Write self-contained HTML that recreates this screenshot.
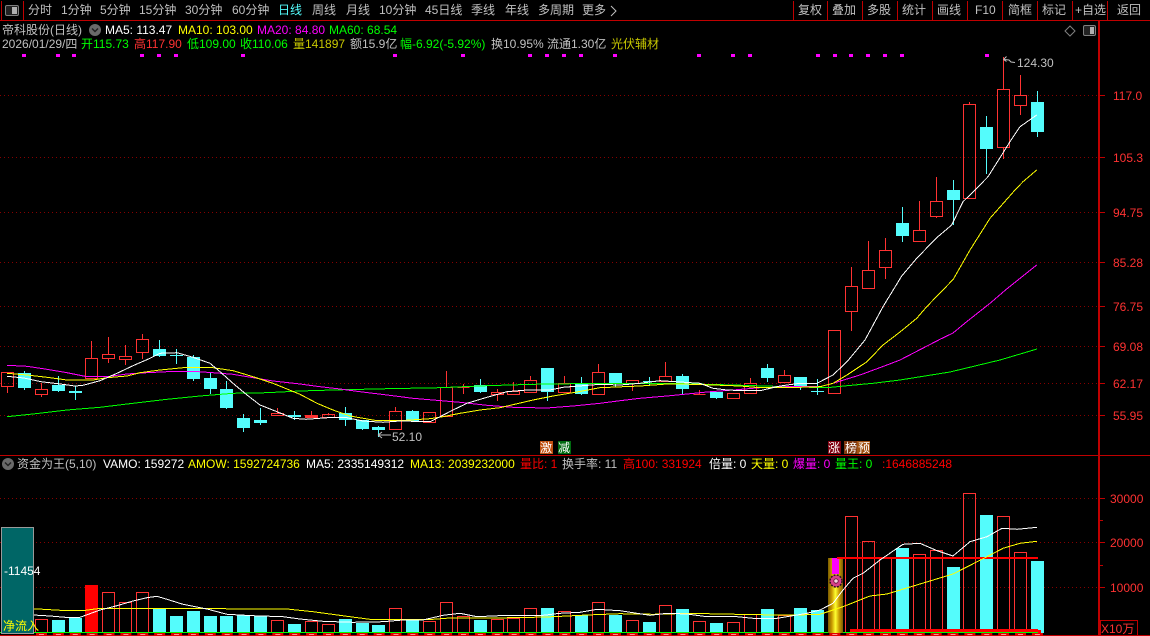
<!DOCTYPE html>
<html lang="zh">
<head>
<meta charset="utf-8">
<title>帝科股份(日线)</title>
<style>
html,body{margin:0;padding:0;background:#000;width:1150px;height:636px;overflow:hidden}
svg{display:block}
text{font-family:"Liberation Sans","WenQuanYi Zen Hei","Noto Sans CJK SC",sans-serif;font-size:12px;white-space:pre}
.g{fill:#c0c0c0}.w{fill:#fff}.y{fill:#ffff00}.m{fill:#ff00ff}.l{fill:#00ff00}.r{fill:#ff3232}.rr{fill:#ff0000}.d{fill:#c8c800}
</style>
</head>
<body>
<svg width="1150" height="636" viewBox="0 0 1150 636" xmlns="http://www.w3.org/2000/svg">
<defs>
<linearGradient id="gold" x1="0" x2="1" y1="0" y2="0">
<stop offset="0" stop-color="#7a5c00"/><stop offset=".25" stop-color="#c89800"/><stop offset=".5" stop-color="#ffff30"/><stop offset=".75" stop-color="#c89800"/><stop offset="1" stop-color="#7a5c00"/>
</linearGradient>
</defs>
<rect width="1150" height="636" fill="#000"/>

<!-- frame lines -->
<g shape-rendering="crispEdges" fill="#c00000">
<rect x="0" y="20" width="1150" height="1"/>
<rect x="0" y="455" width="1150" height="1"/>
<rect x="0" y="635" width="1150" height="1"/>
<rect x="1098" y="21" width="2" height="615"/>
<rect x="1" y="1" width="1" height="19"/>
<rect x="23" y="1" width="1" height="19"/>
<rect x="793" y="1" width="1" height="19"/>
<rect x="827" y="1" width="1" height="19"/>
<rect x="862" y="1" width="1" height="19"/>
<rect x="897" y="1" width="1" height="19"/>
<rect x="932" y="1" width="1" height="19"/>
<rect x="967" y="1" width="1" height="19"/>
<rect x="1002" y="1" width="1" height="19"/>
<rect x="1037" y="1" width="1" height="19"/>
<rect x="1072" y="1" width="1" height="19"/>
<rect x="1107" y="1" width="1" height="19"/>
<!-- ticks -->
<rect x="1100" y="95" width="5" height="1"/><rect x="1100" y="157" width="5" height="1"/><rect x="1100" y="212" width="5" height="1"/><rect x="1100" y="262" width="5" height="1"/><rect x="1100" y="306" width="5" height="1"/><rect x="1100" y="346" width="5" height="1"/><rect x="1100" y="383" width="5" height="1"/><rect x="1100" y="415" width="5" height="1"/>
<rect x="1100" y="498" width="5" height="1"/><rect x="1100" y="542" width="5" height="1"/><rect x="1100" y="587" width="5" height="1"/><rect x="1100" y="520" width="3" height="1"/><rect x="1100" y="565" width="3" height="1"/>
</g>

<!-- left toolbar icon -->
<rect x="5.5" y="5.5" width="13" height="10" rx="1.5" fill="#222" stroke="#808080"/>
<rect x="12" y="7" width="5" height="7" fill="#b0b0b0"/>

<!-- toolbar -->
<g class="g">
<text x="28" y="14" class="g">分时</text>
<text x="61" y="14" class="g">1分钟</text>
<text x="100" y="14" class="g">5分钟</text>
<text x="139" y="14" class="g">15分钟</text>
<text x="185" y="14" class="g">30分钟</text>
<text x="232" y="14" class="g">60分钟</text>
<text x="278" y="14" fill="#54fcfc">日线</text>
<text x="312" y="14" class="g">周线</text>
<text x="346" y="14" class="g">月线</text>
<text x="379" y="14" class="g">10分钟</text>
<text x="425" y="14" class="g">45日线</text>
<text x="471" y="14" class="g">季线</text>
<text x="505" y="14" class="g">年线</text>
<text x="538" y="14" class="g">多周期</text>
<text x="582" y="14" class="g">更多</text>
<path d="M611 6l5 5-5 5" fill="none" stroke="#c0c0c0"/>
<text x="798" y="14" class="g">复权</text>
<text x="832" y="14" class="g">叠加</text>
<text x="867" y="14" class="g">多股</text>
<text x="902" y="14" class="g">统计</text>
<text x="937" y="14" class="g">画线</text>
<text x="975" y="14" class="g">F10</text>
<text x="1008" y="14" class="g">简框</text>
<text x="1042" y="14" class="g">标记</text>
<text x="1075" y="14" class="g">+自选</text>
<text x="1117" y="14" class="g">返回</text>
</g>

<!-- info rows -->
<text x="2" y="34" class="g">帝科股份(日线)</text>
<circle cx="95" cy="30" r="6" fill="#6a6a6a"/>
<path d="M92 28.5l3 3 3-3" fill="none" stroke="#222" stroke-width="1.5"/>
<text x="105" y="34" class="w">MA5: 113.47</text>
<text x="178" y="34" class="y">MA10: 103.00</text>
<text x="257" y="34" class="m">MA20: 84.80</text>
<text x="329" y="34" class="l">MA60: 68.54</text>

<text x="2" y="48" class="g">2026/01/29/四</text>
<text x="81" y="48" class="l">开115.73</text>
<text x="134" y="48" class="r">高117.90</text>
<text x="187" y="48" class="l">低109.00</text>
<text x="240" y="48" class="l">收110.06</text>
<text x="293" y="48" class="d">量141897</text>
<text x="350" y="48" class="g">额15.9亿</text>
<text x="400" y="48" class="l">幅-6.92(-5.92%)</text>
<text x="491" y="48" class="g">换10.95%</text>
<text x="547" y="48" class="g">流通1.30亿</text>
<text x="611" y="48" class="d">光伏辅材</text>

<!-- top-right icons -->
<path d="M1070 26l5 5-5 5-5-5z" fill="none" stroke="#808080"/>
<rect x="1083.5" y="25.5" width="12" height="10" rx="1.5" fill="#222" stroke="#808080"/>
<rect x="1090" y="27" width="4" height="7" fill="#b0b0b0"/>

<!-- magenta signal dots -->
<g fill="#ff00ff" shape-rendering="crispEdges">
<rect x="22" y="54" width="4" height="3"/><rect x="56" y="54" width="4" height="3"/><rect x="72" y="54" width="4" height="3"/><rect x="140" y="54" width="4" height="3"/><rect x="157" y="54" width="4" height="3"/><rect x="174" y="54" width="4" height="3"/><rect x="241" y="54" width="4" height="3"/><rect x="393" y="54" width="4" height="3"/><rect x="461" y="54" width="4" height="3"/><rect x="528" y="54" width="4" height="3"/><rect x="545" y="54" width="4" height="3"/><rect x="562" y="54" width="4" height="3"/><rect x="579" y="54" width="4" height="3"/><rect x="613" y="54" width="4" height="3"/><rect x="697" y="54" width="4" height="3"/><rect x="731" y="54" width="4" height="3"/><rect x="748" y="54" width="4" height="3"/><rect x="816" y="54" width="4" height="3"/><rect x="833" y="54" width="4" height="3"/><rect x="849" y="54" width="4" height="3"/><rect x="866" y="54" width="4" height="3"/><rect x="883" y="54" width="4" height="3"/><rect x="900" y="54" width="4" height="3"/><rect x="985" y="54" width="4" height="3"/>
</g>

<!-- dotted grid -->
<g stroke="#860000" stroke-width="1" stroke-dasharray="1 3" shape-rendering="crispEdges">
<path d="M0 95.5H1098M0 157.5H1098M0 212.5H1098M0 262.5H1098M0 306.5H1098M0 346.5H1098M0 383.5H1098M0 415.5H1098M0 498.5H1098M0 542.5H1098M0 587.5H1098"/>
</g>

<!-- axis labels -->
<text x="1113" y="100" class="r">117.0</text>
<text x="1113" y="162" class="r">105.3</text>
<text x="1113" y="217" class="r">94.75</text>
<text x="1113" y="267" class="r">85.28</text>
<text x="1113" y="311" class="r">76.75</text>
<text x="1113" y="351" class="r">69.08</text>
<text x="1113" y="388" class="r">62.17</text>
<text x="1113" y="420" class="r">55.95</text>
<text x="1110" y="503" class="r">30000</text>
<text x="1110" y="547" class="r">20000</text>
<text x="1110" y="592" class="r">10000</text>
<rect x="1100.5" y="620.5" width="37" height="15" fill="none" stroke="#c00000"/>
<text x="1101" y="633" class="r">X10万</text>

<!-- red candles -->
<path shape-rendering="crispEdges" fill="none" stroke="#ff3232" stroke-width="1" d="
M1.5 372.5H13.5V386.5H1.5ZM7.5 386.5V393
M35.5 389.5H47.5V394.5H35.5ZM41.5 383V389.5M41.5 394.5V397
M85.5 358.5H97.5V378.5H85.5ZM91.5 341V358.5
M102.5 354.5H114.5V358.5H102.5ZM108.5 337V354.5M108.5 358.5V363
M119.5 356.5H131.5V359.5H119.5ZM125.5 345V356.5M125.5 359.5V365
M136.5 339.5H148.5V352.5H136.5ZM142.5 334V339.5M142.5 352.5V359
M271.5 413.5H283.5V415.5H271.5ZM277.5 408V413.5
M305.5 415.5H317.5V417.5H305.5ZM305.5 416.5H317.5M311.5 411V415.5
M322.5 414.5H334.5V417.5H322.5ZM328.5 413V414.5
M389.5 411.5H401.5V429.5H389.5ZM395.5 407V411.5
M423.5 412.5H435.5V422.5H423.5Z
M440.5 387.5H452.5V416.5H440.5ZM446.5 371V387.5
M457.5 387.5H469.5M463.5 384V394
M491.5 392.5H503.5V394.5H491.5ZM497.5 389V392.5M497.5 394.5V401
M507.5 391.5H519.5V394.5H507.5ZM513.5 382V391.5
M524.5 380.5H536.5V392.5H524.5ZM530.5 376V380.5
M558.5 383.5H570.5V392.5H558.5ZM564.5 376V383.5
M592.5 372.5H604.5V394.5H592.5ZM598.5 364V372.5
M626.5 380.5H638.5V383.5H626.5ZM632.5 383.5V391
M659.5 376.5H671.5V381.5H659.5ZM665.5 362V376.5
M693.5 394.5H705.5M699.5 390V394.5
M727.5 393.5H739.5V398.5H727.5Z
M744.5 383.5H756.5V393.5H744.5ZM750.5 378V383.5
M778.5 375.5H790.5V382.5H778.5ZM784.5 370V375.5M784.5 382.5V383
M828.5 330.5H840.5V393.5H828.5Z
M845.5 286.5H857.5V311.5H845.5ZM851.5 267V286.5M851.5 311.5V331
M862.5 270.5H874.5V288.5H862.5ZM868.5 241V270.5
M879.5 250.5H891.5V267.5H879.5ZM885.5 238V250.5M885.5 267.5V279
M913.5 230.5H925.5V241.5H913.5ZM919.5 201V230.5
M930.5 201.5H942.5V216.5H930.5ZM936.5 177V201.5M936.5 216.5V218
M963.5 104.5H975.5V198.5H963.5ZM969.5 102V104.5
M997.5 89.5H1009.5V147.5H997.5ZM1003.5 57V89.5M1003.5 147.5V159
M1014.5 95.5H1026.5V105.5H1014.5ZM1020.5 75V95.5M1020.5 105.5V115"/>

<!-- cyan candle wicks -->
<path shape-rendering="crispEdges" fill="none" stroke="#54fcfc" stroke-width="1" d="
M24.5 371V390M58.5 376V392M75.5 386V400M159.5 340V357M176.5 349V364M193.5 355V381M210.5 372V394M226.5 381V409M243.5 414V432M260.5 408V425M294.5 411V420M345.5 407V426M362.5 420V430M378.5 426V437M412.5 410V422M480.5 379V393M547.5 368V401M581.5 377V395M615.5 373V387M649.5 377V385M682.5 374V394M716.5 392V399M767.5 364V382M800.5 377V390M817.5 379V395M902.5 207V242M953.5 180V225M986.5 116V174M1037.5 91V137"/>
<!-- cyan candle bodies -->
<path shape-rendering="crispEdges" fill="#54fcfc" d="
M18 373H31V388H18ZM52 385H65V391H52ZM69 391H82V393H69ZM153 349H166V356H153ZM170 355H183V356H170ZM187 357H200V379H187ZM204 378H217V389H204ZM220 389H233V408H220ZM237 418H250V428H237ZM254 420H267V423H254ZM288 415H301V417H288ZM339 413H352V420H339ZM356 420H369V429H356ZM372 427H385V430H372ZM406 411H419V421H406ZM474 385H487V392H474ZM541 368H554V392H541ZM575 383H588V394H575ZM609 373H622V383H609ZM643 381H656V382H643ZM676 376H689V389H676ZM710 392H723V398H710ZM761 368H774V378H761ZM794 377H807V386H794ZM811 391H824V392H811ZM896 223H909V236H896ZM947 190H960V200H947ZM980 127H993V149H980ZM1031 102H1044V132H1031Z"/>

<!-- MA lines upper -->
<g fill="none" stroke-width="1" shape-rendering="crispEdges">
<polyline stroke="#00ff00" points="7,416.7 33,414 67,410 100,407.3 133,403.3 167,399.3 200,396 233,393.3 267,392.7 300,391 333,390 387,388.7 440,387.7 487,385.7 533,384.3 600,383.3 667,383.3 733,385 787,386.7 827,387.7 847,385.7 873,383.3 900,380 950,372 1000,360 1037,349"/>
<polyline stroke="#ff00ff" points="7,365.3 27,366.3 47,369.3 67,372.7 87,376.7 107,376.7 127,374 147,372.7 167,371.7 193,371.3 213,372.7 233,374.3 253,377.7 273,381 300,384 320,386.7 340,389 360,391.7 387,395 413,398.3 433,400 460,402.3 487,405.3 513,407.3 547,408 573,406 600,403.3 620,400.7 640,398.3 667,396 687,394 707,392 733,390 760,387.7 787,386.7 820,386.7 833,383.3 860,375 887,365 900,360 940,339.3 953,333 966.7,321.7 990,303.3 1006.7,289 1036.7,265"/>
<polyline stroke="#ffff00" points="7,373.3 27,375 47,377.3 67,380 93,380 107,377.7 127,376 140,372.7 160,370 187,367.3 213,367.7 233,370.7 253,376.7 273,383.3 300,394.3 317,403.3 333,410 350,416 377,420.7 400,420.7 430,418.7 443,416.7 460,413.3 480,410 500,407.7 533,400 553,396 573,392.7 600,387.7 640,386 667,384 693,384.3 713,385 740,386 760,387.7 787,387.7 820,386.7 833,383.3 847,375 867,361.7 883,345 900,332 916.7,318.3 926.7,306.7 953.3,279.3 970,250 990,218.3 1003.3,203.3 1015,190 1023,181.7 1036.7,170"/>
<polyline stroke="#ffffff" points="7,376.3 24,378 41,381.7 58,383.7 75,386 83,385.3 100,380.7 117,373.3 133,365.7 150,358.3 160,353.3 177,352.7 193,357.3 210,363.3 220,371.7 233,383.3 247,395 260,405 277,411.7 293,418.3 306,419.3 333,417.3 345,417.3 363,421 383,422.3 400,421 430,421.7 440,416.7 453,410 467,403.3 487,397.3 507,391.7 527,390 550,390 563,387.3 600,384.3 620,385 640,383.3 660,380.7 680,382 700,383.3 713,388.3 727,390 743,390.7 760,390.7 780,386 800,383.3 817,383.3 833,375 847,361.7 865,340 883,306.7 901.7,276 916.7,258.3 936.7,237.7 951.7,225 963,201.7 975,190 988,176.7 1001.7,155 1010,141.7 1020,126.7 1036.7,115"/>
</g>

<!-- price annotations -->
<path d="M1003.5 59.5l3-3M1003.5 59.5l3 2M1004 59.5l5 0.5 2 2 4 0.5" fill="none" stroke="#c0c0c0"/>
<text x="1017" y="67" class="g">124.30</text>
<path d="M378 435H391M378 435l4-3M378 435l4 3" fill="none" stroke="#c0c0c0"/>
<text x="392" y="441" class="g">52.10</text>

<!-- signal tags -->
<g shape-rendering="crispEdges">
<rect x="540" y="441" width="13" height="13" fill="#c05010"/>
<rect x="558" y="441" width="13" height="13" fill="#006a10"/>
<rect x="828" y="441" width="13" height="13" fill="#800010"/>
<rect x="844" y="441" width="13" height="13" fill="#803810"/>
<rect x="857" y="441" width="13" height="13" fill="#a05010"/>
</g>
<text x="540" y="452" class="w">激</text>
<text x="558" y="452" class="w">减</text>
<text x="828" y="452" class="w">涨</text>
<text x="845" y="452" class="w">榜</text>
<text x="858" y="452" class="w">预</text>

<!-- lower panel header -->
<circle cx="8" cy="464" r="6" fill="#6a6a6a"/>
<path d="M5 462.5l3 3 3-3" fill="none" stroke="#222" stroke-width="1.5"/>
<text x="17" y="468" class="g">资金为王(5,10)</text>
<text x="103" y="468" class="w">VAMO: 159272</text>
<text x="188" y="468" class="y">AMOW: 1592724736</text>
<text x="306" y="468" class="w">MA5: 2335149312</text>
<text x="410" y="468" class="y">MA13: 2039232000</text>
<text x="520" y="468" class="rr">量比: 1</text>
<text x="562" y="468" class="g">换手率: 11</text>
<text x="623" y="468" class="rr">高100: 331924</text>
<text x="709" y="468" class="w">倍量: 0</text>
<text x="751" y="468" class="y">天量: 0</text>
<text x="793" y="468" class="m">爆量: 0</text>
<text x="835" y="468" class="l">量王: 0</text>
<text x="882" y="468" class="rr">:1646885248</text>

<!-- volume bars -->
<path shape-rendering="crispEdges" fill="#54fcfc" d="
M52 620H65V632H52ZM69 618H82V632H69ZM153 609H166V632H153ZM170 616H183V632H170ZM187 611H200V632H187ZM204 616H217V632H204ZM220 616H233V632H220ZM237 615H250V632H237ZM254 616H267V632H254ZM288 624H301V632H288ZM339 619H352V632H339ZM356 623H369V632H356ZM372 625H385V632H372ZM406 620H419V632H406ZM474 620H487V632H474ZM541 608H554V632H541ZM575 615H588V632H575ZM609 615H622V632H609ZM643 622H656V632H643ZM676 609H689V632H676ZM710 623H723V632H710ZM761 609H774V632H761ZM794 608H807V632H794ZM811 610H824V632H811ZM896 548H909V632H896ZM947 567H960V632H947ZM980 515H993V632H980ZM1031 561H1044V633H1031Z"/>
<path shape-rendering="crispEdges" fill="none" stroke="#ff3232" stroke-width="1" d="
M35.5 632V619.5H47.5V632M102.5 632V592.5H114.5V632M119.5 632V602.5H131.5V632M136.5 632V592.5H148.5V632M271.5 632V620.5H283.5V632M305.5 632V621.5H317.5V632M322.5 632V624.5H334.5V632M389.5 632V608.5H401.5V632M423.5 632V621.5H435.5V632M440.5 632V602.5H452.5V632M457.5 632V616.5H469.5V632M491.5 632V619.5H503.5V632M507.5 632V618.5H519.5V632M524.5 632V608.5H536.5V632M558.5 632V611.5H570.5V632M592.5 632V602.5H604.5V632M626.5 632V620.5H638.5V632M659.5 632V605.5H671.5V632M693.5 632V621.5H705.5V632M727.5 632V622.5H739.5V632M744.5 632V614.5H756.5V632M778.5 632V615.5H790.5V632M845.5 632V516.5H857.5V632M862.5 632V541.5H874.5V632M879.5 632V558.5H891.5V632M913.5 632V554.5H925.5V632M930.5 632V550.5H942.5V632M963.5 632V493.5H975.5V632M997.5 632V516.5H1009.5V632M1014.5 632V552.5H1026.5V632"/>
<rect x="85" y="585" width="13" height="47" fill="#ff0000" shape-rendering="crispEdges"/>

<!-- bottom strips -->
<rect x="0" y="632" width="1040" height="1" fill="#00ff00" shape-rendering="crispEdges"/>
<rect x="850" y="629" width="188" height="3" fill="#ff0000" shape-rendering="crispEdges"/>
<rect x="1038" y="630" width="3" height="5" fill="#ff0000" shape-rendering="crispEdges"/>
<line x1="36" y1="634.5" x2="1046" y2="634.5" stroke="#e00000" stroke-width="3" stroke-dasharray="11 5.88"/>
<line x1="39" y1="634.5" x2="1046" y2="634.5" stroke="#ff9090" stroke-width="1" stroke-dasharray="5 11.88"/>

<!-- limit-up gold bar -->
<rect x="828" y="558" width="15" height="75" fill="url(#gold)" shape-rendering="crispEdges"/>
<rect x="832" y="558" width="7" height="16" fill="#ff00ff" shape-rendering="crispEdges"/>
<rect x="837" y="557" width="201" height="2" fill="#ff0000" shape-rendering="crispEdges"/>
<circle cx="836" cy="581" r="6" fill="#d8408a" stroke="#301020" stroke-width="1.5" stroke-dasharray="2 1.2"/>
<circle cx="836" cy="581" r="2.2" fill="#f8d0e0" stroke="#601030" stroke-width=".8"/>

<!-- volume MA lines -->
<g fill="none" stroke-width="1" shape-rendering="crispEdges">
<polyline stroke="#ffff00" points="33,608.7 67,610.7 83,610.7 100,608.3 213,608.3 233,609 287,609 313,611.7 350,616.7 373,619.7 433,619.3 450,618 520,617.7 553,616.7 587,615 620,613.7 653,614.3 677,613.7 707,613.7 737,614.3 777,615 797,615 820,614.3 843,606.7 870,596 887,594 920,584 953,574 987,556.7 1003,548.3 1020,543.3 1037,541.3"/>
<polyline stroke="#ffffff" points="33,615 50,616 70,617.7 80,617.3 100,610 117,605.7 133,601 147,597.7 157,596.3 167,599.3 183,604.3 207,609 227,614.3 253,615.7 283,616.7 300,619 323,621.3 353,622.3 383,621.7 403,620 423,620 443,615.3 460,613.3 477,616.7 507,615.3 540,615.7 560,613.3 580,612.3 597,609.3 620,610.7 637,613.3 650,615.3 667,613.3 687,614 707,616.7 737,616.7 753,618.3 777,618.3 793,615.7 807,613.3 820,610 833,603.3 843,590 853,578.3 863,573.3 880,560 903,544.3 920,543.3 937,550.7 953,556 970,541.7 987,536.7 1002,528.3 1017,529.3 1037,527.3"/>
</g>

<!-- net inflow box -->
<rect x="1.5" y="527.5" width="32" height="106" fill="#006666" stroke="#9a9a9a" shape-rendering="crispEdges"/>
<text x="4" y="575" class="w">-11454</text>
<text x="3" y="630" class="y">净流入</text>
</svg>
</body>
</html>
